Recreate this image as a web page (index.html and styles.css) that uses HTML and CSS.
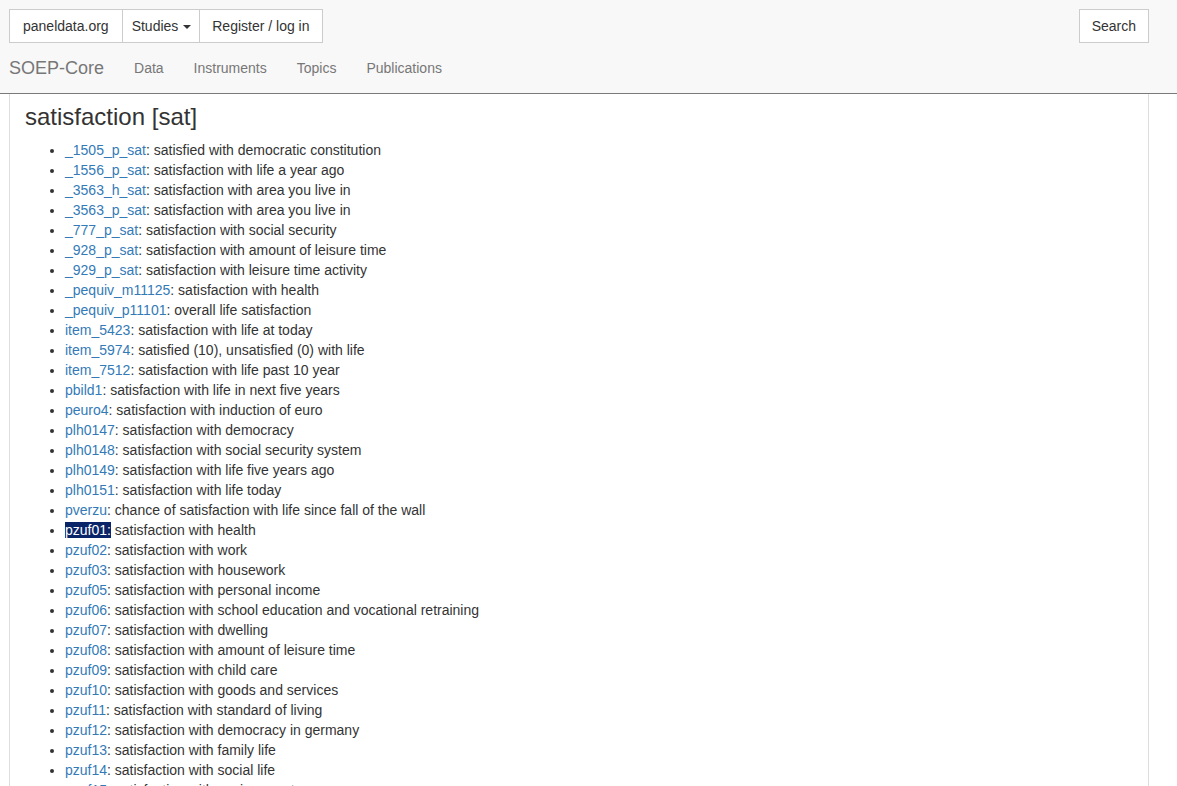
FILE: index.html
```html
<!doctype html>
<html lang="en">
 <head>
  <meta charset="UTF-8">
  <title>satisfaction [sat] - SOEP-Core</title>
  <meta name="viewport" content="width=device-width, initial-scale=1.0">
  <link rel="stylesheet" href="styles.css">
 </head>
 <body>
  <header class="site-header">
   <div class="top-row">
    <div class="btn-group">
     <a class="btn btn-home" href="#">paneldata.org</a>
     <a class="btn btn-toggle" href="#">Studies <span class="caret"></span></a>
     <a class="btn" href="#">Register / log in</a>
    </div>
    <a class="btn" href="#">Search</a>
   </div>
   <nav class="study-nav">
    <a class="brand" href="#">SOEP-Core</a>
    <a class="nav-link" href="#">Data</a>
    <a class="nav-link" href="#">Instruments</a>
    <a class="nav-link" href="#">Topics</a>
    <a class="nav-link" href="#">Publications</a>
   </nav>
  </header>

  <main class="content">
   <h3 class="topic-title">satisfaction [sat]</h3>
   <ul class="var-list">
    <li><a href="#">_1505_p_sat</a>: satisfied with democratic constitution</li>
    <li><a href="#">_1556_p_sat</a>: satisfaction with life a year ago</li>
    <li><a href="#">_3563_h_sat</a>: satisfaction with area you live in</li>
    <li><a href="#">_3563_p_sat</a>: satisfaction with area you live in</li>
    <li><a href="#">_777_p_sat</a>: satisfaction with social security</li>
    <li><a href="#">_928_p_sat</a>: satisfaction with amount of leisure time</li>
    <li><a href="#">_929_p_sat</a>: satisfaction with leisure time activity</li>
    <li><a href="#">_pequiv_m11125</a>: satisfaction with health</li>
    <li><a href="#">_pequiv_p11101</a>: overall life satisfaction</li>
    <li><a href="#">item_5423</a>: satisfaction with life at today</li>
    <li><a href="#">item_5974</a>: satisfied (10), unsatisfied (0) with life</li>
    <li><a href="#">item_7512</a>: satisfaction with life past 10 year</li>
    <li><a href="#">pbild1</a>: satisfaction with life in next five years</li>
    <li><a href="#">peuro4</a>: satisfaction with induction of euro</li>
    <li><a href="#">plh0147</a>: satisfaction with democracy</li>
    <li><a href="#">plh0148</a>: satisfaction with social security system</li>
    <li><a href="#">plh0149</a>: satisfaction with life five years ago</li>
    <li><a href="#">plh0151</a>: satisfaction with life today</li>
    <li><a href="#">pverzu</a>: chance of satisfaction with life since fall of the wall</li>
    <li><span class="selected">pzuf01:</span> satisfaction with health</li>
    <li><a href="#">pzuf02</a>: satisfaction with work</li>
    <li><a href="#">pzuf03</a>: satisfaction with housework</li>
    <li><a href="#">pzuf05</a>: satisfaction with personal income</li>
    <li><a href="#">pzuf06</a>: satisfaction with school education and vocational retraining</li>
    <li><a href="#">pzuf07</a>: satisfaction with dwelling</li>
    <li><a href="#">pzuf08</a>: satisfaction with amount of leisure time</li>
    <li><a href="#">pzuf09</a>: satisfaction with child care</li>
    <li><a href="#">pzuf10</a>: satisfaction with goods and services</li>
    <li><a href="#">pzuf11</a>: satisfaction with standard of living</li>
    <li><a href="#">pzuf12</a>: satisfaction with democracy in germany</li>
    <li><a href="#">pzuf13</a>: satisfaction with family life</li>
    <li><a href="#">pzuf14</a>: satisfaction with social life</li>
    <li><a href="#">pzuf15</a>: satisfaction with environment</li>
   </ul>
  </main>
 </body>
</html>
```

FILE: styles.css
```css
html {
  font-size: 14px;
}

body {
  margin: 0;
  padding: 0;
  background: #fff;
  color: #333;
  font-family: "Liberation Sans", Arial, sans-serif;
  font-size: 14px;
  line-height: 20px;
}

a {
  color: #337ab7;
  text-decoration: none;
}

/* header: button row + study navigation */
.site-header {
  background: #f8f8f8;
  border-bottom: 1px solid #7a7a7a;
}

.top-row {
  display: flex;
  justify-content: space-between;
  align-items: flex-start;
  padding: 9px 28px 0 9px;
}

.btn-group {
  display: flex;
}

.btn {
  display: inline-block;
  padding: 6px 12px;
  background: #fff;
  color: #333;
  border: 1px solid #ccc;
  line-height: 20px;
}

.btn-group .btn + .btn {
  margin-left: -1px;
}

.btn-home {
  padding: 6px 13px;
}

.btn-toggle {
  padding: 6px 8px 6px 9px;
}

.caret {
  display: inline-block;
  width: 0;
  height: 0;
  margin-left: 1px;
  vertical-align: middle;
  border-top: 4px solid #333;
  border-left: 4px solid transparent;
  border-right: 4px solid transparent;
}

.study-nav {
  display: flex;
  height: 50px;
  padding-left: 9px;
}

.brand {
  padding: 15px 15px 15px 0;
  font-size: 18px;
  line-height: 20px;
  color: #777;
}

.nav-link {
  padding: 15px;
  line-height: 20px;
  color: #777;
}

/* topic content */
.content {
  margin: 0 28px 0 9px;
  padding: 10px 15px 0;
  border-left: 1px solid #ddd;
  border-right: 1px solid #ddd;
}

.topic-title {
  margin: 0 0 10px;
  font-size: 24px;
  font-weight: 500;
  line-height: 1.1;
  color: #333;
}

.var-list {
  margin: 0;
  padding-left: 40px;
}

.selected {
  background: #0a246a;
  color: #fff;
}
```
